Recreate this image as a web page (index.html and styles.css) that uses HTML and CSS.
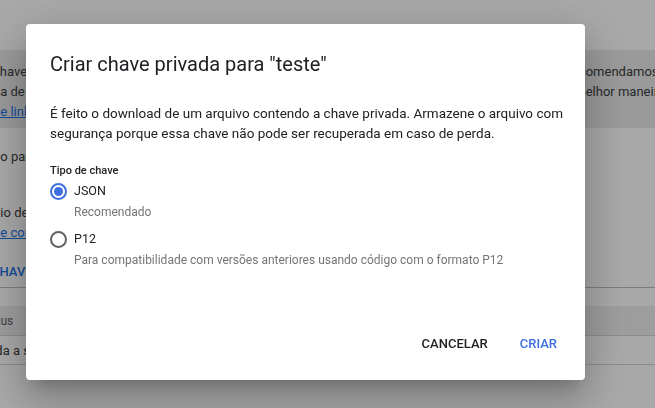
FILE: index.html
```html
<!DOCTYPE html>
<html lang="pt-BR">
<head>
<meta charset="utf-8">
<title>Criar chave privada</title>
<link rel="stylesheet" href="styles.css">
</head>
<body>
<div class="page">
  <div class="topbar"></div>
  <div class="banner">
    <div class="col-left">
      <p class="line">chaves de conta de serviço podem representar um risco de segurança</p>
      <p class="line">na de serviço. Em vez disso</p>
      <p class="line"><a class="link">de link</a></p>
    </div>
    <div class="col-right">
      <p class="line">Recomendamos</p>
      <p class="line">a melhor maneira</p>
    </div>
  </div>
  <div class="section">
    <p class="line">do para</p>
    <p class="line gap">dio de</p>
    <p class="line"><a class="link">de con</a></p>
  </div>
  <div class="action-row"><span class="action">CHAVE</span></div>
  <div class="table">
    <div class="thead"><span class="cell">Status</span></div>
    <div class="trow"><span class="cell">Nada a ser exibido</span></div>
  </div>
</div>

<div class="scrim">
  <div class="dialog" role="dialog">
    <h1 class="title">Criar chave privada para "teste"</h1>
    <p class="desc">É feito o download de um arquivo contendo a chave privada. Armazene o arquivo com segurança porque essa chave não pode ser recuperada em caso de perda.</p>
    <div class="field-label">Tipo de chave</div>
    <div class="option">
      <span class="radio checked"></span>
      <span class="opt-label">JSON</span>
    </div>
    <div class="hint">Recomendado</div>
    <div class="option">
      <span class="radio"></span>
      <span class="opt-label">P12</span>
    </div>
    <div class="hint">Para compatibilidade com versões anteriores usando código com o formato P12</div>
    <div class="actions">
      <button class="btn">CANCELAR</button>
      <button class="btn primary">CRIAR</button>
    </div>
  </div>
</div>
</body>
</html>
```

FILE: styles.css
```css
* { box-sizing: border-box; }
html, body { margin: 0; padding: 0; }
body {
  width: 655px;
  height: 408px;
  overflow: hidden;
  background: #ffffff;
  font-family: Roboto, "Noto Sans", Arial, sans-serif;
  color: #3c4043;
}
.page {
  width: 655px;
  height: 408px;
  overflow: hidden;
}
.topbar { height: 50px; }
.line {
  margin: 0;
  font-size: 13px;
  line-height: 20px;
  white-space: nowrap;
}
.link {
  color: #1a73e8;
  text-decoration: underline;
}
.banner {
  height: 78px;
  background: #eaeaea;
  display: grid;
  grid-template-columns: 564px 1fr;
  padding-top: 12px;
  overflow: hidden;
}
.col-left { margin-left: -7px; overflow: hidden; }
.col-right { overflow: hidden; }
.section {
  padding-top: 19px;
  margin-left: -7px;
}
.section .gap { margin-top: 36px; }
.action-row {
  height: 45px;
  border-bottom: 1px solid #bdbdbd;
  display: flex;
  align-items: center;
  margin-left: -9px;
  padding-top: 13px;
}
.action {
  font-size: 13px;
  font-weight: 500;
  color: #1a73e8;
  white-space: nowrap;
}
.table { margin-top: 18px; margin-left: -21px; }
.thead {
  height: 30px;
  background: #eeeeee;
  border-bottom: 1px solid #d6d6d6;
  display: flex;
  align-items: center;
  font-size: 12px;
  color: #5f6368;
}
.trow {
  height: 29px;
  border-bottom: 1px solid #d6d6d6;
  display: flex;
  align-items: center;
  font-size: 13px;
  white-space: nowrap;
}
.scrim {
  position: fixed;
  inset: 0;
  background: rgba(0, 0, 0, 0.34);
  padding: 24px 0 0 26px;
}
.dialog {
  width: 559px;
  height: 356px;
  background: #ffffff;
  border-radius: 4px;
  box-shadow: 0 11px 15px -7px rgba(0,0,0,.2), 0 24px 38px 3px rgba(0,0,0,.14), 0 9px 46px 8px rgba(0,0,0,.12);
  padding: 26px 16px 18px 24px;
  display: flex;
  flex-direction: column;
  color: #212121;
}
.title {
  margin: 0;
  font-size: 20px;
  line-height: 28px;
  font-weight: 400;
  color: #202124;
}
.desc {
  margin: 25px 0 0 0;
  font-size: 13.5px;
  line-height: 20px;
  color: #212121;
}
.field-label {
  margin-top: 20px;
  font-size: 11px;
  line-height: 16px;
  font-weight: 500;
  color: #212121;
}
.option {
  display: flex;
  align-items: center;
  gap: 7px;
  height: 24px;
}
.option + .hint { margin-top: -1px; }
.hint + .option { margin-top: 5px; }
.radio {
  width: 17px;
  height: 17px;
  border-radius: 50%;
  border: 2px solid #616161;
  flex: none;
  display: flex;
  align-items: center;
  justify-content: center;
}
.radio.checked { border-color: #3d6fe0; }
.radio.checked::after {
  content: "";
  width: 9px;
  height: 9px;
  border-radius: 50%;
  background: #3d6fe0;
}
.opt-label {
  font-size: 12.5px;
  line-height: 20px;
  color: #212121;
}
.hint {
  padding-left: 24px;
  font-size: 12px;
  line-height: 20px;
  color: #757575;
}
.actions {
  margin-top: auto;
  display: flex;
  justify-content: flex-end;
  margin-right: -4px;
}
.btn {
  font-family: inherit;
  font-size: 13px;
  font-weight: 500;
  height: 36px;
  line-height: 36px;
  padding: 0 16px;
  border: 0;
  background: transparent;
  color: #212121;
  border-radius: 4px;
}
.btn.primary { color: #3d6fe0; }
```
